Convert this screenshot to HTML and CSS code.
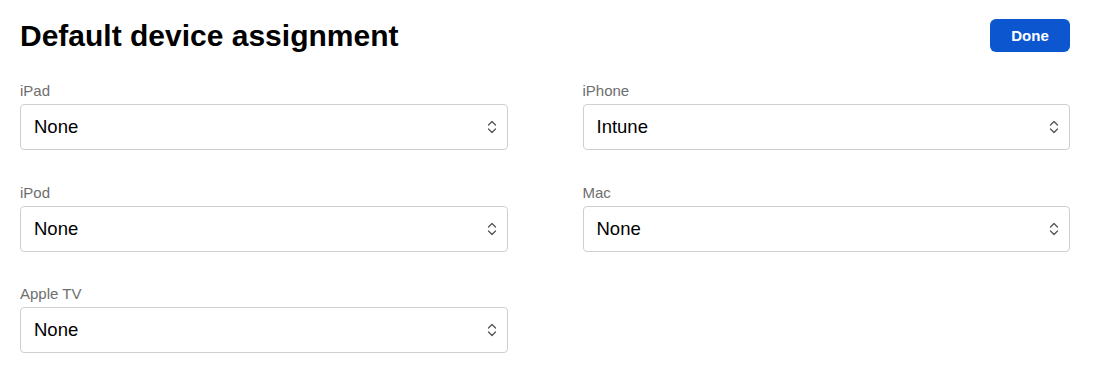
FILE: index.html
```html
<!DOCTYPE html>
<html lang="en">
<head>
  <meta charset="UTF-8">
  <title>Default device assignment</title>
  <link rel="stylesheet" href="styles.css">
</head>
<body>
  <div class="header">
    <h1>Default device assignment</h1>
    <button class="done">Done</button>
  </div>

  <div class="fields">
    <div class="field">
      <label>iPad</label>
      <div class="select"><span>None</span><svg width="10" height="14" viewBox="0 0 10 14"><path d="M1.5 5 L5 1.5 L8.5 5 M1.5 9 L5 12.5 L8.5 9" fill="none" stroke="#555" stroke-width="1.3" stroke-linecap="round" stroke-linejoin="round"/></svg></div>
    </div>
    <div class="field">
      <label>iPhone</label>
      <div class="select"><span>Intune</span><svg width="10" height="14" viewBox="0 0 10 14"><path d="M1.5 5 L5 1.5 L8.5 5 M1.5 9 L5 12.5 L8.5 9" fill="none" stroke="#555" stroke-width="1.3" stroke-linecap="round" stroke-linejoin="round"/></svg></div>
    </div>
    <div class="field">
      <label>iPod</label>
      <div class="select"><span>None</span><svg width="10" height="14" viewBox="0 0 10 14"><path d="M1.5 5 L5 1.5 L8.5 5 M1.5 9 L5 12.5 L8.5 9" fill="none" stroke="#555" stroke-width="1.3" stroke-linecap="round" stroke-linejoin="round"/></svg></div>
    </div>
    <div class="field">
      <label>Mac</label>
      <div class="select"><span>None</span><svg width="10" height="14" viewBox="0 0 10 14"><path d="M1.5 5 L5 1.5 L8.5 5 M1.5 9 L5 12.5 L8.5 9" fill="none" stroke="#555" stroke-width="1.3" stroke-linecap="round" stroke-linejoin="round"/></svg></div>
    </div>
    <div class="field">
      <label>Apple TV</label>
      <div class="select"><span>None</span><svg width="10" height="14" viewBox="0 0 10 14"><path d="M1.5 5 L5 1.5 L8.5 5 M1.5 9 L5 12.5 L8.5 9" fill="none" stroke="#555" stroke-width="1.3" stroke-linecap="round" stroke-linejoin="round"/></svg></div>
    </div>
  </div>
</body>
</html>
```

FILE: styles.css
```css
body {
  margin: 0;
  padding: 19px 26px 0 20px;
  background-color: #fff;
  color: #000;
  font-family: "Liberation Sans", Arial, sans-serif;
}
.header {
  display: flex;
  justify-content: space-between;
  align-items: center;
}
h1 {
  margin: 0;
  font-size: 30px;
  font-weight: bold;
  line-height: 33px;
}
.done {
  width: 80px;
  height: 33px;
  background-color: #0c57d0;
  color: #fff;
  border: none;
  border-radius: 6px;
  font-family: "Liberation Sans", Arial, sans-serif;
  font-size: 15px;
  font-weight: bold;
  cursor: pointer;
}
.fields {
  display: grid;
  grid-template-columns: 1fr 1fr;
  column-gap: 75px;
  row-gap: 33.5px;
  margin-top: 30px;
}
.field label {
  display: block;
  font-size: 15px;
  line-height: 17px;
  color: #6e6e6e;
  margin-bottom: 5px;
}
.select {
  display: flex;
  justify-content: space-between;
  align-items: center;
  height: 44px;
  padding: 0 10px 0 13px;
  border: 1px solid #cfcfcf;
  border-radius: 4px;
  font-size: 18.5px;
}
```
